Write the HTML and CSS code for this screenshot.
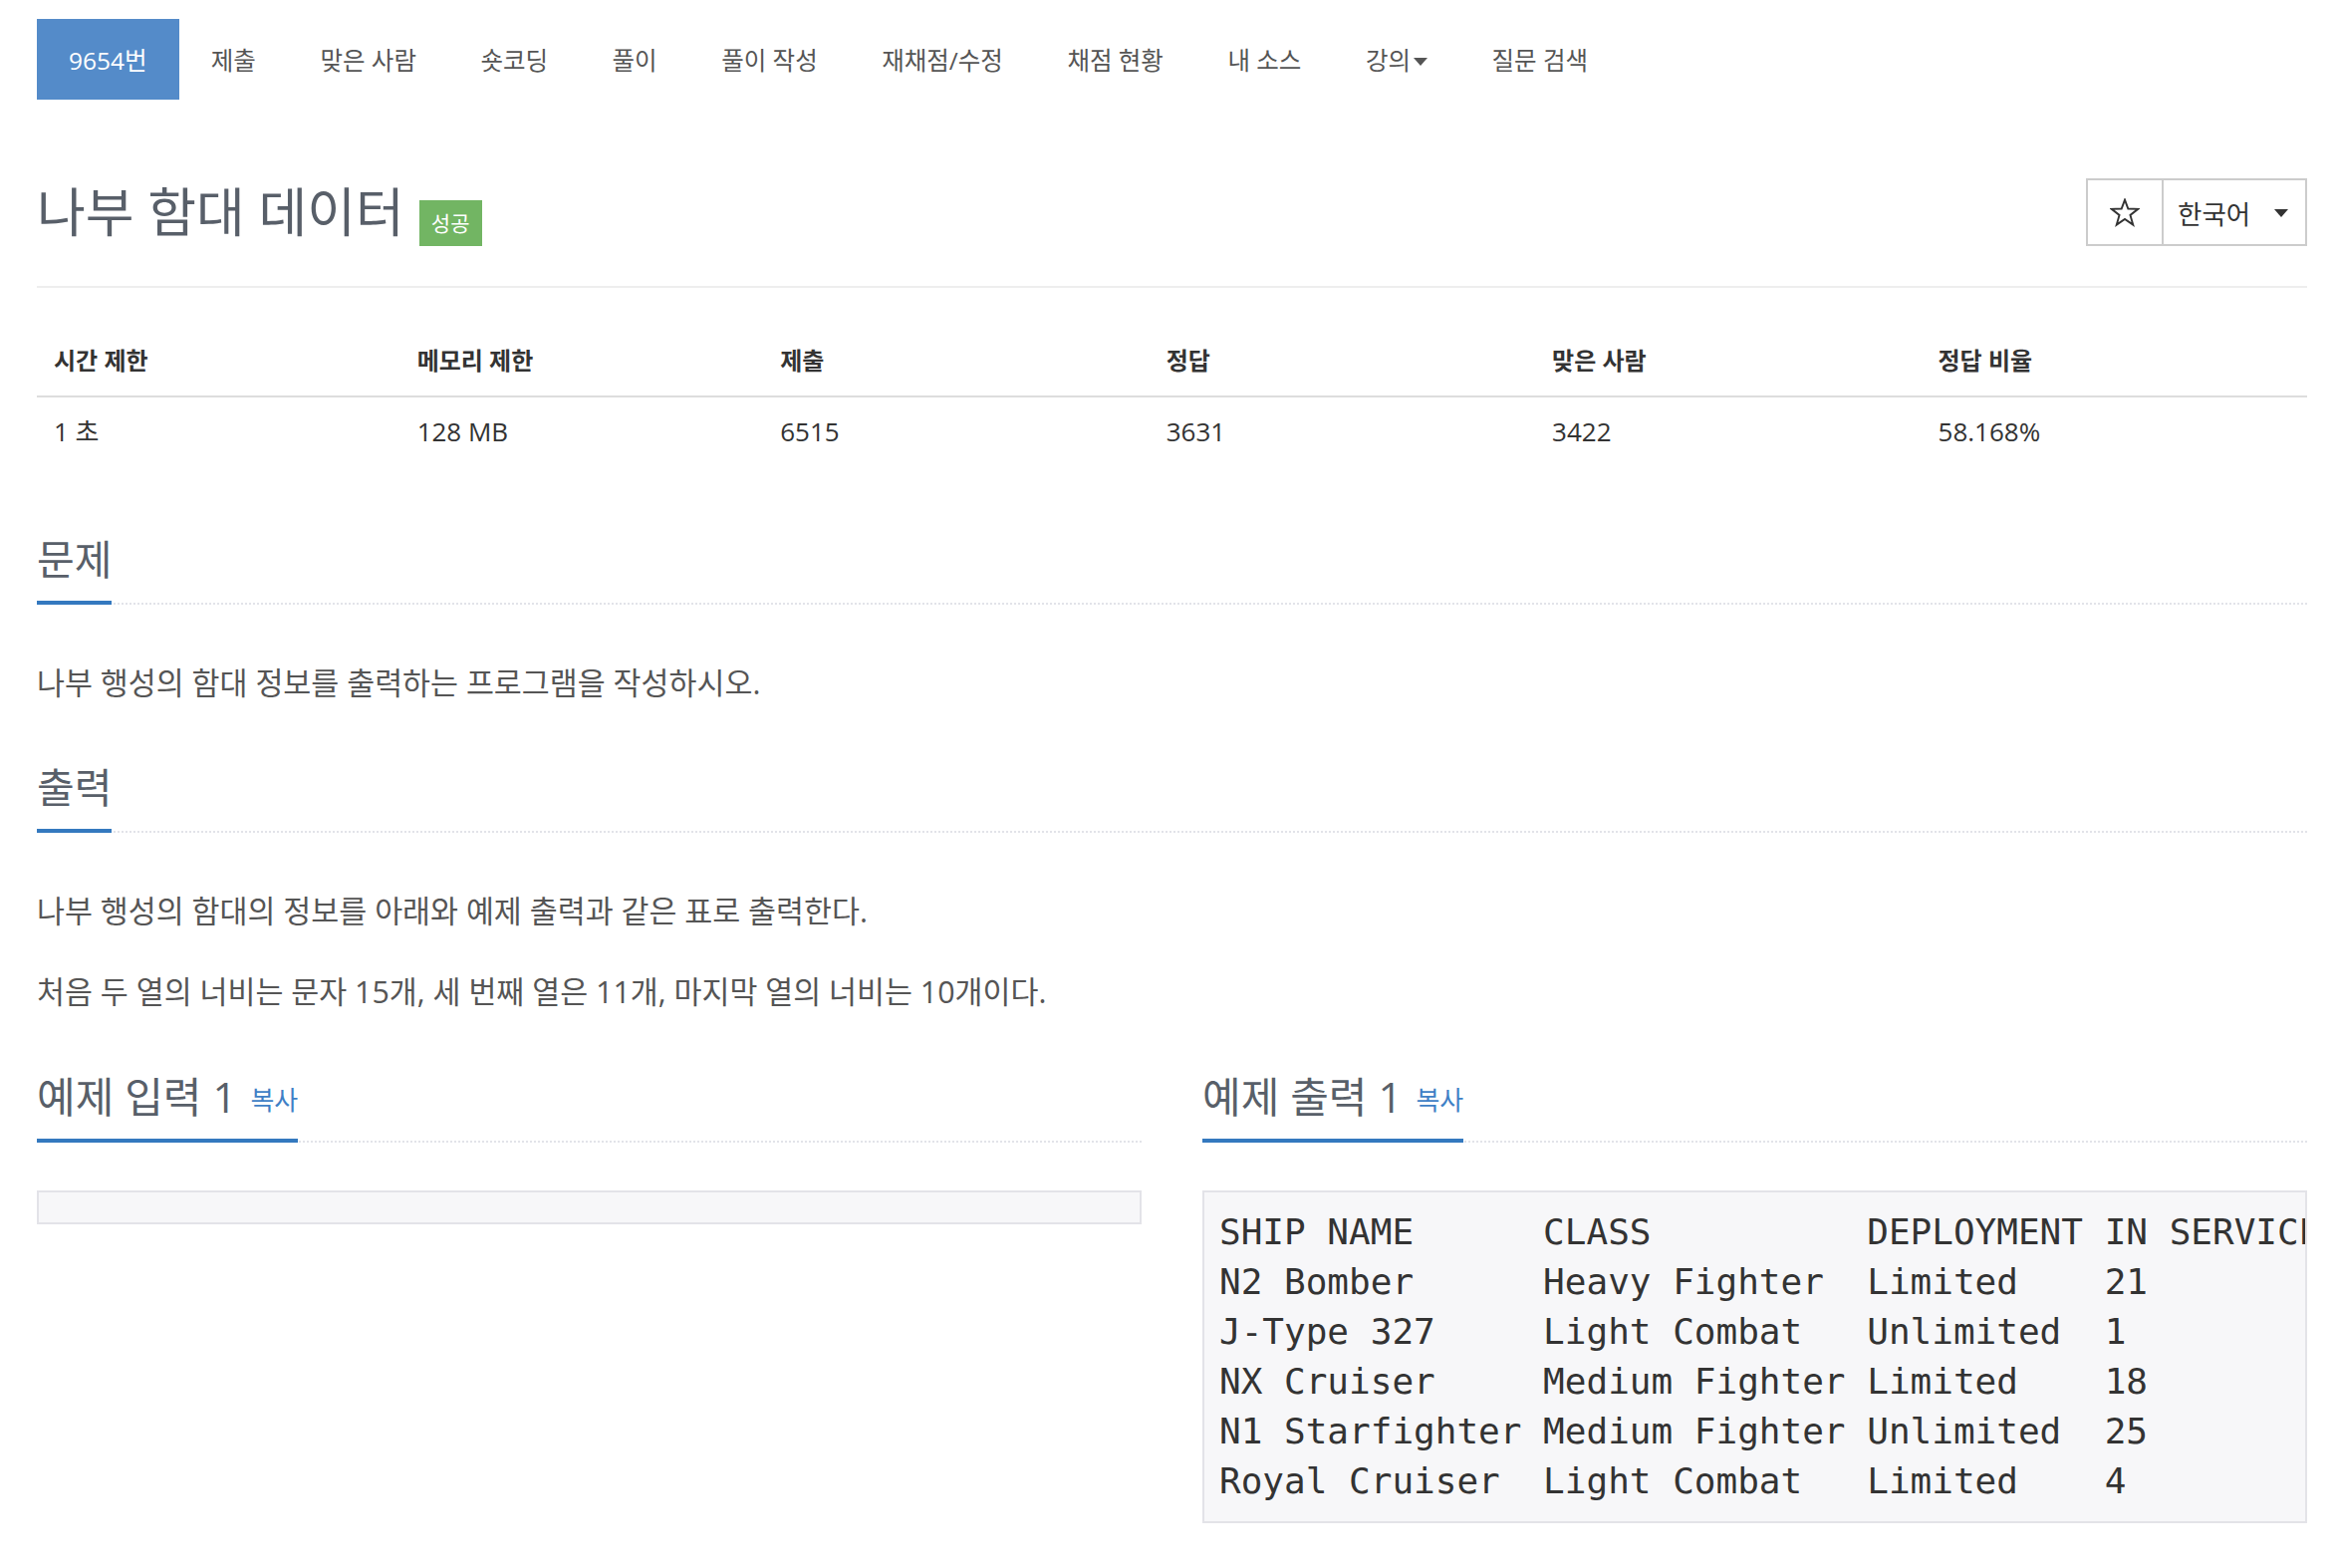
FILE: index.html
```html
<!DOCTYPE html>
<html lang="ko">
<head>
<meta charset="utf-8">
<title>나부 함대 데이터</title>
<link rel="stylesheet" href="styles.css">
</head>
<body>
<div class="page">
  <ul class="nav">
    <li class="active"><a href="#">9654번</a></li>
    <li><a href="#">제출</a></li>
    <li><a href="#">맞은 사람</a></li>
    <li><a href="#">숏코딩</a></li>
    <li><a href="#">풀이</a></li>
    <li><a href="#">풀이 작성</a></li>
    <li><a href="#">재채점/수정</a></li>
    <li><a href="#">채점 현황</a></li>
    <li><a href="#">내 소스</a></li>
    <li><a href="#">강의<span class="caret"></span></a></li>
    <li><a href="#">질문 검색</a></li>
  </ul>

  <div class="title-row">
    <h1 class="title"><span class="title-text">나부 함대 데이터</span><span class="badge">성공</span></h1>
    <div class="btn-group">
      <div class="btn star">
        <svg width="30" height="29" viewBox="0 0 28 27"><polygon points="14,1.5 17.1,9.8 26.4,10.1 19.1,15.8 21.7,24.8 14,19.5 6.3,24.8 8.9,15.8 1.6,10.1 10.9,9.8" fill="none" stroke="#333" stroke-width="1.8" stroke-linejoin="miter"/></svg>
      </div>
      <div class="btn lang"><span>한국어</span><span class="caret dark"></span></div>
    </div>
  </div>

  <table class="info">
    <colgroup>
      <col class="c16"><col class="c16"><col class="c17"><col class="c17"><col class="c17"><col class="c17">
    </colgroup>
    <thead>
      <tr><th>시간 제한</th><th>메모리 제한</th><th>제출</th><th>정답</th><th>맞은 사람</th><th>정답 비율</th></tr>
    </thead>
    <tbody>
      <tr><td>1 초</td><td>128 MB</td><td>6515</td><td>3631</td><td>3422</td><td>58.168%</td></tr>
    </tbody>
  </table>

  <section class="section first">
    <div class="headline"><h2>문제</h2></div>
    <div class="content">
      <p>나부 행성의 함대 정보를 출력하는 프로그램을 작성하시오.</p>
    </div>
  </section>

  <section class="section next">
    <div class="headline"><h2>출력</h2></div>
    <div class="content">
      <p>나부 행성의 함대의 정보를 아래와 예제 출력과 같은 표로 출력한다.</p>
      <p>처음 두 열의 너비는 문자 15개, 세 번째 열은 11개, 마지막 열의 너비는 10개이다.</p>
    </div>
  </section>

  <div class="samples">
    <section class="sample">
      <div class="headline"><h2>예제 입력 1<a class="copy" href="#">복사</a></h2></div>
      <pre class="sample-data"></pre>
    </section>
    <section class="sample">
      <div class="headline"><h2>예제 출력 1<a class="copy" href="#">복사</a></h2></div>
      <pre class="sample-data">SHIP NAME      CLASS          DEPLOYMENT IN SERVICE
N2 Bomber      Heavy Fighter  Limited    21
J-Type 327     Light Combat   Unlimited  1
NX Cruiser     Medium Fighter Limited    18
N1 Starfighter Medium Fighter Unlimited  25
Royal Cruiser  Light Combat   Limited    4</pre>
    </section>
  </div>
</div>
</body>
</html>
```

FILE: styles.css
```css
* {
  box-sizing: border-box;
}

body {
  margin: 0;
  background: #fff;
  color: #555;
  font-family: "Open Sans", "Noto Sans CJK KR", sans-serif;
}

.page {
  padding: 19px 28px 40px 37px;
}

/* nav */
.nav {
  display: flex;
  list-style: none;
  margin: 0;
  padding: 0;
  height: 81px;
}

.nav a {
  display: flex;
  align-items: center;
  height: 81px;
  padding: 0 32.25px;
  font-size: 24.5px;
  color: #555;
  text-decoration: none;
}

.nav .active a {
  background: #548bc9;
  color: #fff;
  padding: 0 32px;
}

.caret {
  display: inline-block;
  width: 0;
  height: 0;
  border-top: 8px solid #555;
  border-left: 7px solid transparent;
  border-right: 7px solid transparent;
  margin-left: 3px;
  margin-top: 5px;
}

.caret.dark {
  border-top-color: #333;
  margin: 2px 0 0 0;
}

/* title */
.title-row {
  display: flex;
  justify-content: space-between;
  align-items: center;
  margin-top: 79px;
  padding-bottom: 40px;
  border-bottom: 2px solid #eee;
}

.title {
  display: flex;
  align-items: flex-end;
  gap: 15px;
  margin: 0;
  height: 68px;
  font-size: 53px;
  line-height: 68px;
  font-weight: normal;
  color: #585f69;
}

.badge {
  height: 46px;
  line-height: 46px;
  padding: 0 12px;
  font-size: 21px;
  background: #72b563;
  color: #fff;
}

.btn-group {
  display: flex;
}

.btn {
  display: flex;
  align-items: center;
  height: 68px;
  border: 2px solid #ccc;
  background: #fff;
  color: #333;
}

.star {
  width: 78px;
  justify-content: center;
}

.lang {
  width: 144px;
  border-left: none;
  padding: 0 17px 0 14px;
  justify-content: space-between;
  font-size: 26.5px;
}

/* info table */
.info {
  width: 100%;
  margin-top: 37px;
  border-collapse: collapse;
  table-layout: fixed;
}

.c16 { width: 16%; }
.c17 { width: 17%; }

.info th {
  text-align: left;
  font-size: 24px;
  font-weight: bold;
  color: #333;
  padding: 18px 17px;
  height: 72px;
  line-height: 34px;
  border-bottom: 2px solid #ddd;
}

.info td {
  font-size: 26px;
  color: #333;
  padding: 16px 17px 20px;
  height: 72px;
  line-height: 34px;
}

/* sections */
.section {
  display: flow-root;
}

.section.first {
  margin-top: 70px;
}

.section.next {
  margin-top: 24px;
}

.headline {
  border-bottom: 2px dotted #e2e3e9;
}

.headline h2 {
  display: inline-block;
  height: 67px;
  margin: 0 0 -2px;
  padding-bottom: 21px;
  border-bottom: 4px solid #3479bf;
  font-size: 41px;
  line-height: 42px;
  font-weight: normal;
  color: #585f69;
  white-space: nowrap;
}

.content {
  margin-top: 57px;
}

.content p {
  margin: 0 0 37px;
  font-size: 30.4px;
  line-height: 44px;
  color: #555;
}

/* samples */
.samples {
  display: grid;
  grid-template-columns: 1fr 1fr;
  column-gap: 61px;
  margin-top: 25px;
}

.sample {
  min-width: 0;
}

.sample .headline h2 {
  font-size: 42px;
}

.copy {
  margin-left: 14px;
  font-size: 26px;
  line-height: 0;
  vertical-align: 3px;
  color: #3f7fc6;
  text-decoration: none;
}

.sample-data {
  margin: 48px 0 0;
  padding: 15px;
  border: 2px solid #e3e3e8;
  background: #f7f7f9;
  color: #333;
  font-family: "DejaVu Sans Mono", monospace;
  font-size: 36px;
  line-height: 50px;
  white-space: pre;
  overflow: hidden;
}
```
